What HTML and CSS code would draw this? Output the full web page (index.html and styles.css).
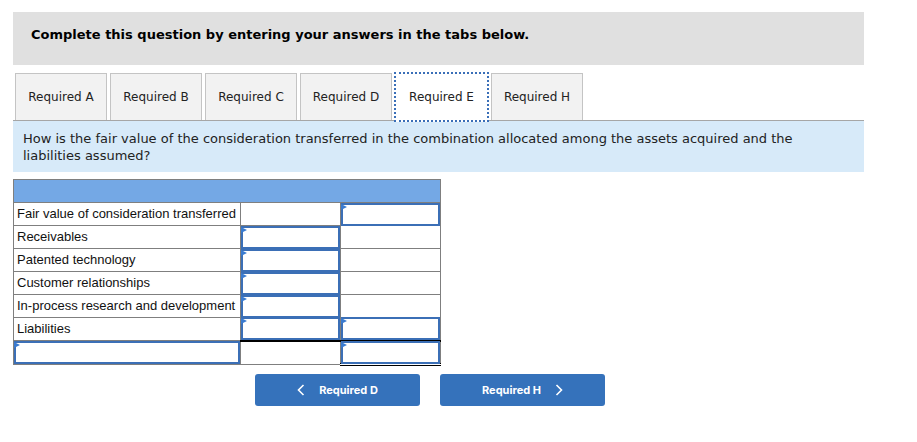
FILE: index.html
```html
<!DOCTYPE html>
<html>
<head>
<meta charset="utf-8">
<link rel="stylesheet" href="styles.css">
</head>
<body>
<div class="page">
  <div class="instr">Complete this question by entering your answers in the tabs below.</div>
  <div class="tabs">
    <div class="tab">Required A</div>
    <div class="tab">Required B</div>
    <div class="tab">Required C</div>
    <div class="tab">Required D</div>
    <div class="tab active">Required E</div>
    <div class="tab">Required H</div>
  </div>
  <div class="question">How is the fair value of the consideration transferred in the combination allocated among the assets acquired and the liabilities assumed?</div>
  <table class="grid">
    <colgroup><col class="c1"><col class="c2"><col class="c3"></colgroup>
    <tr class="head"><td colspan="3"></td></tr>
    <tr><td class="label">Fair value of consideration transferred</td><td></td><td><div class="inp"></div></td></tr>
    <tr><td class="label">Receivables</td><td><div class="inp"></div></td><td></td></tr>
    <tr><td class="label">Patented technology</td><td><div class="inp"></div></td><td></td></tr>
    <tr><td class="label">Customer relationships</td><td><div class="inp"></div></td><td></td></tr>
    <tr><td class="label">In-process research and development</td><td><div class="inp"></div></td><td></td></tr>
    <tr class="liab"><td class="label">Liabilities</td><td class="single"><div class="inp"></div></td><td class="single"><div class="inp"></div></td></tr>
    <tr><td><div class="inp"></div></td><td></td><td class="double"><div class="inp"></div></td></tr>
  </table>
  <div class="nav">
    <div class="btn"><svg class="chev" width="8" height="12" viewBox="0 0 8 12"><path d="M6.5 1 L1.5 6 L6.5 11" fill="none" stroke="#fff" stroke-width="1.6"/></svg><span>Required D</span></div>
    <div class="btn"><span>Required H</span><svg class="chev" width="8" height="12" viewBox="0 0 8 12"><path d="M1.5 1 L6.5 6 L1.5 11" fill="none" stroke="#fff" stroke-width="1.6"/></svg></div>
  </div>
</div>
</body>
</html>
```

FILE: styles.css
```css
html, body {
  margin: 0;
  padding: 0;
  background: #fff;
}
.page {
  padding: 12px 53px 0 13px;
  font-family: "DejaVu Sans", Verdana, sans-serif;
  color: #000;
}
.instr {
  height: 53px;
  box-sizing: border-box;
  background: #e0e0e0;
  padding: 14px 0 0 18px;
  font-size: 13px;
  font-weight: bold;
  line-height: 17px;
}
.tabs {
  display: flex;
  gap: 3px;
  margin-top: 8px;
  padding-left: 2px;
  border-bottom: 1px solid #a6a6a6;
  height: 47px;
}
.tab {
  width: 92px;
  height: 47px;
  box-sizing: border-box;
  background: #f2f2f2;
  border: 1px solid #c4c4c4;
  border-bottom: none;
  font-size: 12px;
  color: #222;
  display: flex;
  align-items: center;
  justify-content: center;
}
.tab.active {
  width: 95px;
  margin-top: -1px;
  height: 50px;
  background: #fff;
  border: 2px dotted #3a6fb8;
  position: relative;
  z-index: 1;
  margin-left: -1px;
  margin-right: -1px;
}
.question {
  background: #d7eaf9;
  padding: 9px 10px 8px 10px;
  font-size: 13px;
  line-height: 17px;
  color: #222;
}
.grid {
  margin-top: 7px;
  border-collapse: collapse;
  font-family: "Liberation Sans", Arial, sans-serif;
  font-size: 13px;
  table-layout: fixed;
  width: 428px;
}
.grid col.c1 { width: 227px; }
.grid col.c2 { width: 100px; }
.grid col.c3 { width: 100px; }
.grid td {
  border: 1px solid #7f7f7f;
  height: 23px;
  padding: 0;
  box-sizing: border-box;
}
.grid tr.head td {
  background: #74a8e5;
}
.grid td.label {
  padding: 0 0 2px 3px;
  color: #111;
  white-space: nowrap;
  overflow: hidden;
}
.inp {
  position: relative;
  height: 23px;
  box-sizing: border-box;
  border: 2px solid #3b6fb6;
  margin: -1px 0 -1px 0;
}
.inp::before {
  content: "";
  position: absolute;
  left: -2px;
  top: -1px;
  border-top: 3.5px solid transparent;
  border-bottom: 3.5px solid transparent;
  border-left: 6px solid #3a7bd0;
}
.grid td.single {
  border-bottom: 2px solid #000;
}
.grid td.double {
  border-bottom: 3px double #000;
}
.nav {
  display: flex;
  gap: 20px;
  padding-left: 242px;
  margin-top: 8px;
}
.btn {
  width: 165px;
  height: 32px;
  background: #3572bb;
  border-radius: 3px;
  color: #fff;
  font-family: Inter, "Open Sans", sans-serif;
  font-weight: 700;
  font-size: 11px;
  display: flex;
  align-items: center;
  justify-content: center;
  gap: 14px;
}
.chev { display: block; }
```
